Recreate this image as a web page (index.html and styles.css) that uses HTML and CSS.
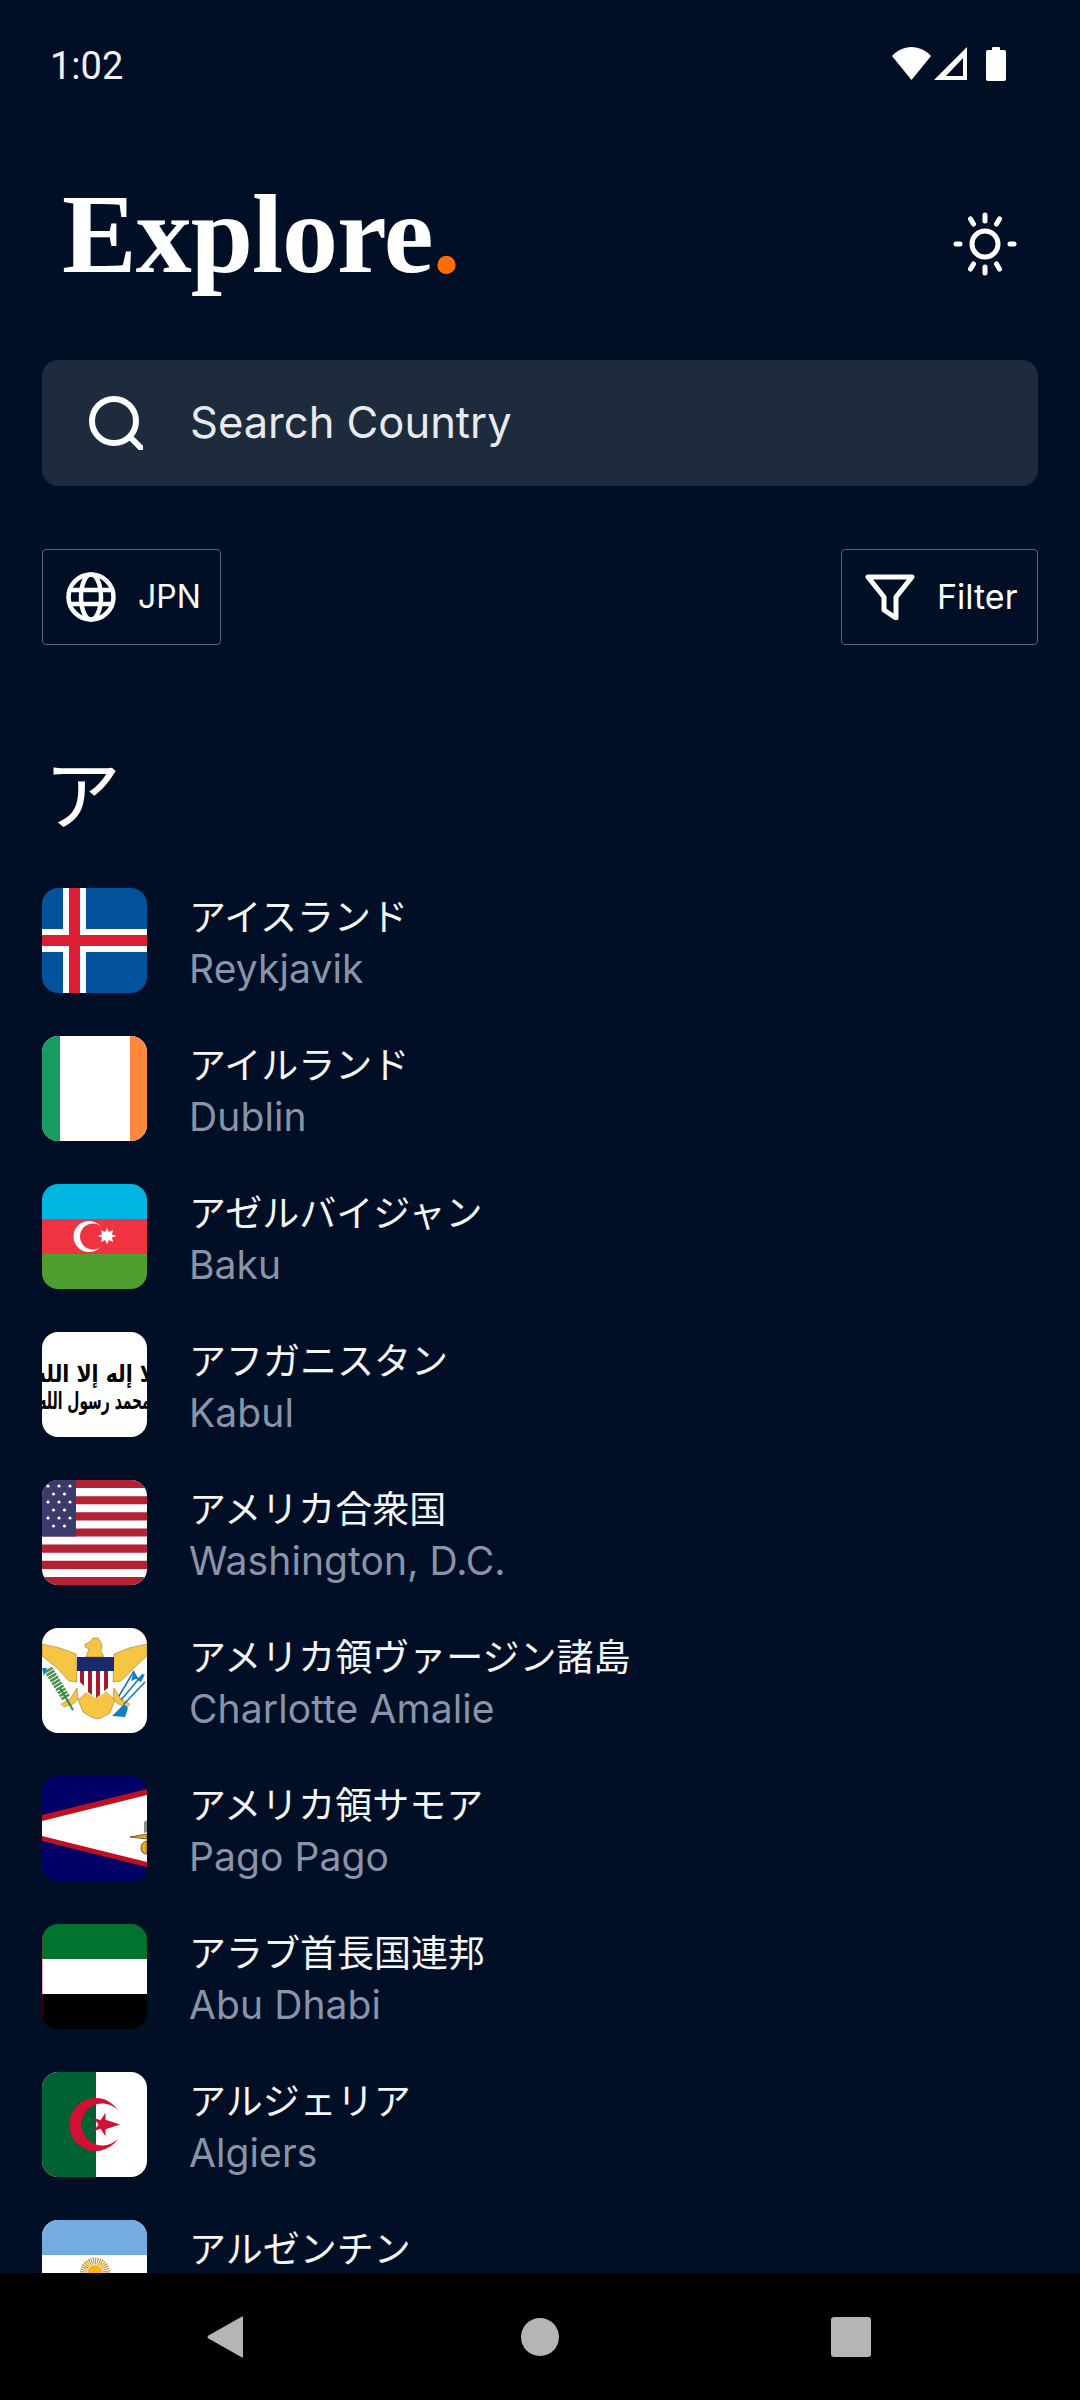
FILE: index.html
```html
<!DOCTYPE html>
<html lang="ja">
<head>
<meta charset="utf-8">
<title>Explore</title>
<link rel="stylesheet" href="styles.css">
</head>
<body>
<div class="screen">
  <div class="status">
    <span class="clock">1:02</span>
    <div class="status-icons">
      <svg class="ic-wifi" viewBox="0 0 39 33"><path d="M19.500 33 0 9C5 3.500 12 0 19.500 0S34 3.500 39 9z" fill="#fff"/></svg>
      <svg class="ic-signal" viewBox="0 0 33 33"><path fill-rule="evenodd" d="M33 0v33H0zM29 11 12 29h17z" fill="#fff"/></svg>
      <svg class="ic-batt" viewBox="0 0 20 34"><path d="M6 3V1q0-1 1-1h6q1 0 1 1v2h4q2 0 2 2v27q0 2-2 2H2q-2 0-2-2V5q0-2 2-2z" fill="#fff"/></svg>
    </div>
  </div>

  <header class="head">
    <h1 class="logo">Explore<span class="dot">.</span></h1>
    <svg class="ic-sun" viewBox="0 0 64 64" fill="none" stroke="#fff" stroke-linecap="round">
      <circle cx="32" cy="32" r="13" stroke-width="5"/>
      <g stroke-width="5"><path d="M32 3v6M32 55v6M3 32h4M57 32h4M17.500 7l3 5M43.500 52l3 5M46.500 7l-3 5M20.500 52l-3 5"/></g>
    </svg>
  </header>

  <div class="search">
    <svg class="ic-search" viewBox="0 0 54 54" fill="none" stroke="#fff" stroke-width="6" stroke-linecap="round"><circle cx="25" cy="25" r="22"/><path d="M41 41l11 11"/></svg>
    <span class="search-text">Search Country</span>
  </div>

  <div class="tools">
    <div class="tool tool-lang">
      <svg class="ic-globe" viewBox="0 0 50 50" fill="none" stroke="#fff" stroke-width="4.500"><circle cx="25" cy="25" r="22.500"/><ellipse cx="25" cy="25" rx="10" ry="22.500"/><path d="M3 18h44M3 32h44"/></svg>
      <span>JPN</span>
    </div>
    <div class="tool tool-filter">
      <svg class="ic-funnel" viewBox="0 0 50 46" fill="none" stroke="#fff" stroke-width="5" stroke-linejoin="round"><path d="M3 3h44L31 23v21l-12-8V23z"/></svg>
      <span>Filter</span>
    </div>
  </div>

  <h2 class="letter">ア</h2>

  <div class="list">
    <div class="row">
      <svg class="flag" viewBox="0 0 105 105"><rect width="105" height="105" fill="#02529c"/><path d="M21 0h23v105H21zM0 41h105v23H0z" fill="#fff"/><path d="M27 0h11v105H27zM0 47h105v11H0z" fill="#dc1e35"/></svg>
      <div class="names"><div class="jp">アイスランド</div><div class="cap">Reykjavik</div></div>
    </div>
    <div class="row">
      <svg class="flag" viewBox="0 0 105 105"><rect width="105" height="105" fill="#fff"/><rect width="18" height="105" fill="#169b62"/><rect x="88" width="17" height="105" fill="#ff883e"/></svg>
      <div class="names"><div class="jp">アイルランド</div><div class="cap">Dublin</div></div>
    </div>
    <div class="row">
      <svg class="flag" viewBox="0 0 105 105"><rect width="105" height="35" fill="#00b5e2"/><rect y="35" width="105" height="35" fill="#ef3340"/><rect y="70" width="105" height="35" fill="#509e2f"/><circle cx="47" cy="52.500" r="15.500" fill="#fff"/><circle cx="51" cy="52.500" r="13" fill="#ef3340"/><path d="M65 44l2 4 4-2-1 4.500 4.500 1.500-4.500 1.500 1 4.500-4-2-2 4-2-4-4 2 1-4.500-4.500-1.500 4.500-1.500-1-4.500 4 2z" fill="#fff"/></svg>
      <div class="names"><div class="jp">アゼルバイジャン</div><div class="cap">Baku</div></div>
    </div>
    <div class="row">
      <svg class="flag" viewBox="0 0 105 105"><rect width="105" height="105" fill="#fff"/><text class="shahada" transform="translate(52.500 50) scale(.85 1)" text-anchor="middle" direction="rtl">لا إله إلا الله</text><text class="shahada" transform="translate(52.500 77) scale(.58 1)" text-anchor="middle" direction="rtl">محمد رسول الله</text></svg>
      <div class="names"><div class="jp">アフガニスタン</div><div class="cap">Kabul</div></div>
    </div>
    <div class="row">
      <svg class="flag" viewBox="0 0 105 105"><rect width="105" height="105" fill="#fff"/><path d="M0 0h105v8.100H0zM0 16.200h105v8.100H0zM0 32.300h105v8.100H0zM0 48.500h105v8.100H0zM0 64.600h105v8.100H0zM0 80.800h105v8.100H0zM0 96.900h105v8.100H0z" fill="#b22234"/><rect width="34" height="56.500" fill="#3c3b6e"/><g fill="#fff"><circle cx="6" cy="6" r="1.600"/><circle cx="17" cy="6" r="1.600"/><circle cx="28" cy="6" r="1.600"/><circle cx="11.500" cy="14" r="1.600"/><circle cx="22.500" cy="14" r="1.600"/><circle cx="6" cy="22" r="1.600"/><circle cx="17" cy="22" r="1.600"/><circle cx="28" cy="22" r="1.600"/><circle cx="11.500" cy="30" r="1.600"/><circle cx="22.500" cy="30" r="1.600"/><circle cx="6" cy="38" r="1.600"/><circle cx="17" cy="38" r="1.600"/><circle cx="28" cy="38" r="1.600"/><circle cx="11.500" cy="46" r="1.600"/><circle cx="22.500" cy="46" r="1.600"/></g></svg>
      <div class="names"><div class="jp">アメリカ合衆国</div><div class="cap">Washington, D.C.</div></div>
    </div>
    <div class="row">
      <svg class="flag" viewBox="0 0 105 105"><rect width="105" height="105" fill="#fff"/>
        <g fill="#f6c544" stroke="#8a6d1e" stroke-width=".5"><path d="M0 16l18 4 16 6 1 28-8-1-12-13L0 28zM105 16l-18 4-15 6-1 28 8-1 13-13 13-12z"/><path d="M43 16l5-2 3-4h5l4 6-1 7 3 6H44l3-8-4-2zM35 60l-7 11-9 5 3 3 9-3 5-5zM72 60l7 11 9 5-3 3-9-3-5-5z"/><path d="M36 72l9-8h19l9 8-5 13-9 5-4 1-6-2-8-5z"/></g>
        <rect x="35" y="29" width="37" height="14" fill="#1a2a6c"/>
        <path d="M37 43h33v10q0 9-16 17-17-8-17-17z" fill="#fff"/><path d="M38 43h4v15l-4-4zM46 43h4v24l-4-3zM54 43h4v24l-4 3zM62 43h4v17l-4 3z" fill="#a6192e"/>
        <path d="M6 41l18 29" stroke="#4b8f4f" stroke-width="9" stroke-dasharray="2.500 1" fill="none"/><path d="M18 60l13 22" stroke="#2e8b45" stroke-width="2" fill="none"/>
        <path d="M79 72l22-26M82 76l21-22M77 68l15-25" stroke="#127cc1" stroke-width="1.600" fill="none"/><path d="M70 88l12-12 4 4-3 9zM92 43l-3 10 7-3zM103 46l-9 5 5 3zM0 40h5l-3 8z" fill="#127cc1"/></svg>
      <div class="names"><div class="jp">アメリカ領ヴァージン諸島</div><div class="cap">Charlotte Amalie</div></div>
    </div>
    <div class="row">
      <svg class="flag" viewBox="0 0 105 105"><rect width="105" height="105" fill="#006"/><path d="M105 13 0 39v26l105 26z" fill="#bd1021"/><path d="M105 19 0 45v15l105 26z" fill="#fff"/><path d="M88 61l17-3v5zM105 65v13q-6 0-6-6t6-7z" fill="#e6a822" stroke="#5a4310" stroke-width=".8"/><path d="M102 46l3-2v12l-3 1z" fill="#8d8d8d"/></svg>
      <div class="names"><div class="jp">アメリカ領サモア</div><div class="cap">Pago Pago</div></div>
    </div>
    <div class="row">
      <svg class="flag" viewBox="0 0 105 105"><rect width="105" height="35" fill="#00732f"/><rect y="35" width="105" height="35" fill="#fff"/><rect y="70" width="105" height="35" fill="#000"/><rect width=".7" height="105" fill="#c8102e" opacity=".5"/></svg>
      <div class="names"><div class="jp">アラブ首長国連邦</div><div class="cap">Abu Dhabi</div></div>
    </div>
    <div class="row">
      <svg class="flag" viewBox="0 0 105 105"><rect width="105" height="105" fill="#fff"/><rect width="54" height="105" fill="#006233"/><path d="M76.500 39a26.500 26.500 0 1 0 0 27 21 21 0 1 1 0-27z" fill="#d21034"/><path d="M78 52.500l-14.500 4.700v7l-5-7.500-7 2.500 5-6.700-5-6.700 7 2.500 5-7.500v7z" fill="#d21034"/></svg>
      <div class="names"><div class="jp">アルジェリア</div><div class="cap">Algiers</div></div>
    </div>
    <div class="row">
      <svg class="flag" viewBox="0 0 105 105"><rect width="105" height="105" fill="#fff"/><rect width="105" height="35" fill="#74acdf"/><rect y="70" width="105" height="35" fill="#74acdf"/><circle cx="53" cy="52.500" r="11.500" fill="none" stroke="#c98a1b" stroke-width="7" stroke-dasharray="1 1"/><circle cx="53" cy="52.500" r="7.500" fill="#f6b40e"/></svg>
      <div class="names"><div class="jp">アルゼンチン</div><div class="cap">Buenos Aires</div></div>
    </div>
  </div>

  <nav class="navbar">
    <svg class="ic-back" viewBox="0 0 36 42"><path d="M35 .5q1-.5 1 1v39q0 1.500-1 1L1.500 22.500q-2-1.500 0-3z" fill="#b5b5b5"/></svg>
    <svg class="ic-home" viewBox="0 0 38 38"><circle cx="19" cy="19" r="19" fill="#b5b5b5"/></svg>
    <svg class="ic-recent" viewBox="0 0 40 40"><rect width="40" height="40" rx="3" fill="#b5b5b5"/></svg>
  </nav>
</div>
</body>
</html>
```
FILE: styles.css
```css
* { box-sizing: border-box; }
html, body { margin: 0; padding: 0; background: #000f26; }
.screen {
  width: 1080px;
  height: 2400px;
  display: flex;
  flex-direction: column;
  overflow: hidden;
  background: #000f26;
  color: #fff;
  font-family: "Inter", "Noto Sans CJK JP", sans-serif;
}
.status {
  height: 130px;
  flex: none;
  display: flex;
  justify-content: space-between;
  align-items: flex-start;
  padding: 46px 74px 0 50px;
}
.clock { font: 400 38px/40px "Roboto", sans-serif; color: #f2f2f2; }
.status-icons { display: flex; align-items: flex-start; margin-top: 1px; }
.ic-wifi { width: 39px; height: 33px; display: block; }
.ic-signal { width: 33px; height: 33px; display: block; margin-left: 3px; }
.ic-batt { width: 20px; height: 34px; display: block; margin-left: 19px; }

.head {
  flex: none;
  height: 230px;
  display: flex;
  justify-content: space-between;
  align-items: flex-start;
  padding: 0 63px 0 62px;
}
.logo {
  margin: 48px 0 0;
  font: 700 112px/112px "Liberation Serif", serif;
  letter-spacing: -1px;
}
.dot { color: #ff6d00; }
.ic-sun { width: 64px; height: 64px; margin-top: 82px; display: block; }

.search {
  flex: none;
  margin: 0 42px;
  height: 126px;
  background: #1e2b3d;
  border-radius: 16px;
  display: flex;
  align-items: center;
  padding-left: 47px;
}
.ic-search { width: 54px; height: 54px; display: block; flex: none; }
.search-text { margin-left: 47px; font-size: 43.500px; line-height: 50px; margin-top: -3px; color: #e8eaee; }

.tools {
  flex: none;
  margin: 63px 42px 0;
  display: flex;
  justify-content: space-between;
}
.tool {
  height: 96px;
  border: 1.500px solid #56637a;
  border-radius: 4px;
  display: flex;
  align-items: center;
  line-height: 40px;
}
.tool-lang { width: 179px; padding-left: 23px; gap: 22px; font-size: 32px; }
.tool-filter { width: 197px; padding-left: 23px; gap: 22px; font-size: 34px; }
.ic-globe { width: 50px; height: 50px; display: block; flex: none; }
.ic-funnel { width: 50px; height: 46px; display: block; flex: none; }

.letter {
  flex: none;
  margin: 95px 0 0 44px;
  height: 101px;
  font: 400 77px/101px "Noto Sans CJK JP", sans-serif;
}
.list {
  flex: 1 1 0;
  min-height: 0;
  overflow: hidden;
  padding: 47px 42px 0;
  display: flex;
  flex-direction: column;
  gap: 43px;
}
.row { flex: none; display: flex; align-items: center; height: 105px; }
.flag { width: 105px; height: 105px; border-radius: 16px; display: block; flex: none; }
.shahada { font: 700 24px "DejaVu Sans", sans-serif; fill: #000; }
.names { margin-left: 42px; padding-top: 2px; display: flex; flex-direction: column; }
.jp { font: 400 37px/53px "Noto Sans CJK JP", sans-serif; color: #f5f6f8; }
.cap { font: 400 39px/53px "Inter", sans-serif; letter-spacing: .1px; color: #8a94a8; }

.navbar {
  flex: none;
  height: 127px;
  background: #000;
  display: flex;
  align-items: center;
}
.ic-back { width: 36px; height: 42px; display: block; margin-left: 207px; }
.ic-home { width: 38px; height: 38px; display: block; margin-left: 278px; }
.ic-recent { width: 40px; height: 40px; display: block; margin-left: 272px; }
```
